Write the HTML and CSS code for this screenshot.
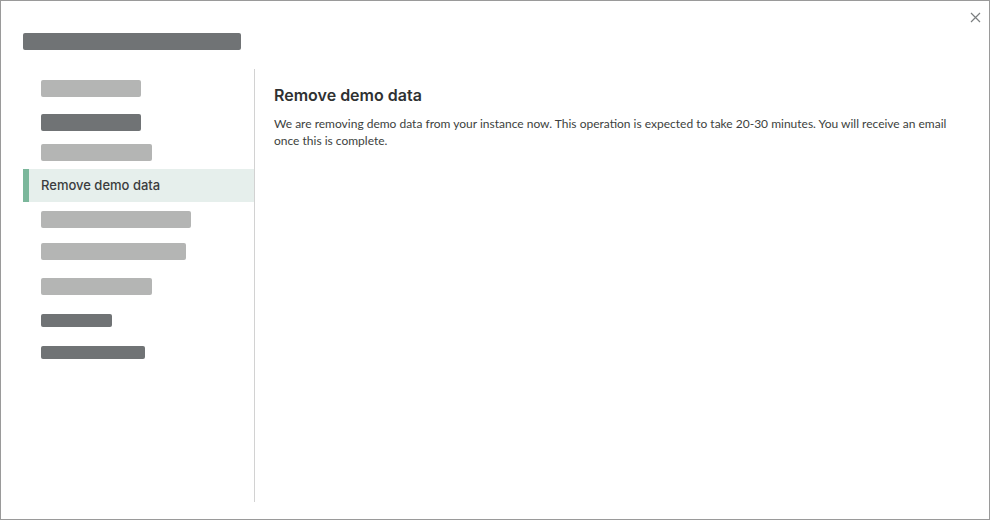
FILE: index.html
```html
<!DOCTYPE html>
<html lang="en">
<head>
    <meta charset="UTF-8">
    <title>Settings</title>
    <link rel="stylesheet" href="styles.css">
</head>
<body>
    <div class="modal">
        <button class="close-button" aria-label="Close">
            <svg width="11" height="11" viewBox="0 0 11 11">
                <path d="M1 1L10 10M10 1L1 10" stroke="#7b7f80" stroke-width="1.2" fill="none"/>
            </svg>
        </button>

        <div class="modal-head">
            <div class="skeleton dark title-bar"></div>
        </div>

        <div class="modal-body">
            <div class="sidebar">
                <div class="nav-item gap-0"><div class="skeleton light w100"></div></div>
                <div class="nav-item gap-17"><div class="skeleton dark w100"></div></div>
                <div class="nav-item gap-13"><div class="skeleton light w111"></div></div>
                <div class="nav-item active">Remove demo data</div>
                <div class="nav-item gap-9"><div class="skeleton light w150"></div></div>
                <div class="nav-item gap-15"><div class="skeleton light w145"></div></div>
                <div class="nav-item gap-18"><div class="skeleton light w111"></div></div>
                <div class="nav-item gap-19"><div class="skeleton dark short w71"></div></div>
                <div class="nav-item gap-19"><div class="skeleton dark short w104"></div></div>
            </div>

            <div class="content">
                <h2>Remove demo data</h2>
                <p>We are removing demo data from your instance now. This operation is expected to take 20-30 minutes. You will receive an email once this is complete.</p>
            </div>
        </div>
    </div>
</body>
</html>
```

FILE: styles.css
```css
body {
    margin: 0;
    background-color: #fff;
    font-family: "Lato", "Liberation Sans", sans-serif;
}

.modal {
    position: relative;
    width: 990px;
    height: 520px;
    box-sizing: border-box;
    border: 1px solid #9a9a9a;
    background-color: #fff;
}

.close-button {
    position: absolute;
    top: 11px;
    right: 8px;
    padding: 0;
    border: none;
    background: none;
    cursor: pointer;
    line-height: 0;
}

.modal-head {
    padding: 32px 0 0 22px;
}

.skeleton {
    height: 17px;
    border-radius: 2px;
}

.skeleton.dark {
    background-color: #707375;
}

.skeleton.light {
    background-color: #b4b5b4;
}

.skeleton.short {
    height: 13px;
}

.title-bar {
    width: 218px;
}

.modal-body {
    display: flex;
    margin-top: 19px;
    height: 433px;
}

.sidebar {
    width: 231px;
    margin-left: 22px;
    padding-top: 11px;
    border-right: 1px solid #d2d2d2;
}

.nav-item {
    padding-left: 18px;
}

.nav-item.active {
    margin-top: 8px;
    height: 33px;
    line-height: 33px;
    padding-left: 12px;
    border-left: 6px solid #7bb79b;
    background-color: #e6efec;
    color: #3b3d3e;
    font-family: "Inter", sans-serif;
    font-size: 13px;
    font-weight: 500;
}

.gap-9 { margin-top: 9px; }
.gap-13 { margin-top: 13px; }
.gap-15 { margin-top: 15px; }
.gap-17 { margin-top: 17px; }
.gap-18 { margin-top: 18px; }
.gap-19 { margin-top: 19px; }

.w71 { width: 71px; }
.w100 { width: 100px; }
.w104 { width: 104px; }
.w111 { width: 111px; }
.w145 { width: 145px; }
.w150 { width: 150px; }

.content {
    flex: 1;
    padding: 16px 40px 0 19px;
}

.content h2 {
    margin: 0 0 10px;
    font-family: "Inter", sans-serif;
    font-size: 16px;
    font-weight: 600;
    line-height: 20px;
    color: #2f3132;
}

.content p {
    margin: 0;
    font-size: 12px;
    line-height: 17px;
    color: #3d3f40;
}
```
